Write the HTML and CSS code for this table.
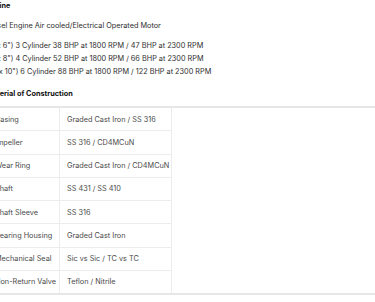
FILE: index.html
```html
<!DOCTYPE html>
<html>
<head>
<meta charset="utf-8">
<link rel="stylesheet" href="styles.css">
</head>
<body>
<div class="page">
  <div class="content">
    <h4 class="heading">Engine</h4>
    <p class="para">Diesel Engine Air cooled/Electrical Operated Motor</p>
    <div class="specs">
      <div class="line">(4"x 6") 3 Cylinder 38 BHP at 1800 RPM / 47 BHP at 2300 RPM</div>
      <div class="line">(4"x 8") 4 Cylinder 52 BHP at 1800 RPM / 66 BHP at 2300 RPM</div>
      <div class="line">(6" x 10") 6 Cylinder 88 BHP at 1800 RPM / 122 BHP at 2300 RPM</div>
    </div>
    <h4 class="heading heading-moc">Material of Construction</h4>
  </div>
  <div class="table-wrap">
    <table class="moc">
      <colgroup><col class="c1"><col class="c2"></colgroup>
      <tr><td>Casing</td><td>Graded Cast Iron / SS 316</td></tr>
      <tr><td>Impeller</td><td>SS 316 / CD4MCuN</td></tr>
      <tr><td>Wear Ring</td><td>Graded Cast Iron / CD4MCuN</td></tr>
      <tr><td>Shaft</td><td>SS 431 / SS 410</td></tr>
      <tr><td>Shaft Sleeve</td><td>SS 316</td></tr>
      <tr><td>Bearing Housing</td><td>Graded Cast Iron</td></tr>
      <tr><td>Mechanical Seal</td><td>Sic vs Sic / TC vs TC</td></tr>
      <tr><td>Non-Return Valve</td><td>Teflon / Nitrile</td></tr>
    </table>
  </div>
</div>
</body>
</html>
```
FILE: styles.css
```css
html, body {
  margin: 0;
  padding: 0;
  background: #ffffff;
  overflow: hidden;
}
body {
  font-family: Inter, "Noto Sans", sans-serif;
  font-size: 7.3px;
  color: #2e2e2e;
}
.page {
  width: 375px;
  overflow: hidden;
}
.content {
  margin-left: -14px;
  padding-top: 1px;
}
.heading {
  margin: 0;
  font-size: 7.3px;
  font-weight: 700;
  color: #111111;
  line-height: 9px;
}
.para {
  margin: 11px 0 0;
  line-height: 9px;
}
.specs {
  margin-top: 9px;
}
.line {
  line-height: 13px;
}
.heading-moc {
  margin-top: 11px;
}
.table-wrap {
  margin-top: 8px;
  border-top: 2px solid #e6e6e6;
  border-bottom: 2px solid #e6e6e6;
  margin-left: -13px;
  width: 388px;
}
.moc {
  border-collapse: collapse;
  table-layout: fixed;
  width: 184px;
}
.moc .c1 { width: 72px; }
.moc .c2 { width: 112px; }
.moc td {
  border: 1px solid #ececec;
  padding: 0 6px 0 7px;
  height: 22.25px;
  color: #4a4a4a;
  white-space: nowrap;
}
.moc tr:first-child td { border-top: none; }
.moc tr:last-child td { border-bottom: none; }
```
